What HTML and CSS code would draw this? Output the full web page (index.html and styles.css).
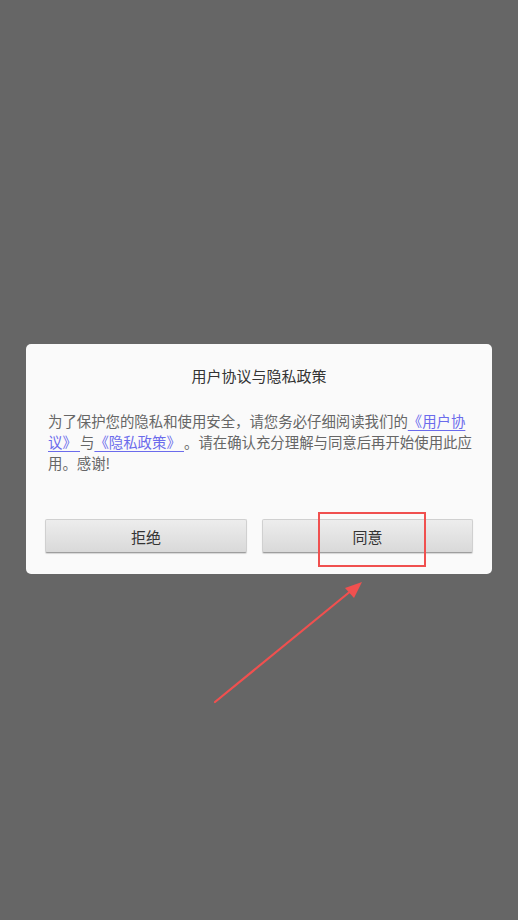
FILE: index.html
```html
<!DOCTYPE html>
<html lang="zh-CN">
<head>
<meta charset="utf-8">
<title>用户协议与隐私政策</title>
<link rel="stylesheet" href="styles.css">
</head>
<body>
<div class="screen">
  <div class="dialog">
    <h1 class="title">用户协议与隐私政策</h1>
    <p class="message">为了保护您的隐私和使用安全，请您务必仔细阅读我们的<a class="link" href="#">《用户协议》 </a>与<a class="link" href="#">《隐私政策》 </a>。请在确认充分理解与同意后再开始使用此应用。感谢!</p>
    <div class="actions">
      <button class="btn btn-reject">拒绝</button>
      <button class="btn btn-agree">同意</button>
    </div>
  </div>
  <div class="highlight"></div>
  <svg class="arrow" width="518" height="920" viewBox="0 0 518 920">
    <line x1="215" y1="702" x2="352" y2="590" stroke="#f0504f" stroke-width="2.2" stroke-linecap="round"/>
    <polygon points="362,582 345,588 354,598" fill="#f0504f"/>
  </svg>
</div>
</body>
</html>
```
FILE: styles.css
```css
* { box-sizing: border-box; }
html, body {
  margin: 0;
  padding: 0;
  background: #666666;
}
.screen {
  position: relative;
  width: 518px;
  height: 920px;
  display: flex;
  align-items: center;
  justify-content: center;
  font-family: "Noto Sans CJK SC", "Noto Sans", sans-serif;
}
.dialog {
  width: 466px;
  background: #fafafa;
  border-radius: 5px;
  padding: 20px 19px 21px 19px;
  margin-top: -2px;
}
.title {
  margin: 0;
  font-size: 15px;
  font-weight: 400;
  line-height: 24px;
  color: #333333;
  text-align: center;
}
.message {
  margin: 22px -4px 0 3px;
  font-size: 14.4px;
  line-height: 21px;
  color: #666666;
  text-spacing-trim: space-all;
}
.link {
  color: #6b6bec;
  text-decoration: underline;
  text-underline-offset: 3px;
}
.actions {
  display: grid;
  grid-template-columns: 202px 211px;
  column-gap: 15px;
  margin-top: 46px;
}
.btn {
  height: 34px;
  font-family: "Noto Sans CJK SC", "Noto Sans", sans-serif;
  font-size: 15px;
  color: #333333;
  background: linear-gradient(#ededed, #d9d9d9);
  border: 1px solid #d0d0d0;
  border-bottom-color: #9e9e9e;
  border-radius: 2px;
  box-shadow: 0 1px 1px rgba(0,0,0,0.15);
  padding: 0;
}
.highlight {
  position: absolute;
  left: 318px;
  top: 512px;
  width: 108px;
  height: 55px;
  border: 2px solid #f0504f;
}
.arrow {
  position: absolute;
  left: 0;
  top: 0;
}
```
